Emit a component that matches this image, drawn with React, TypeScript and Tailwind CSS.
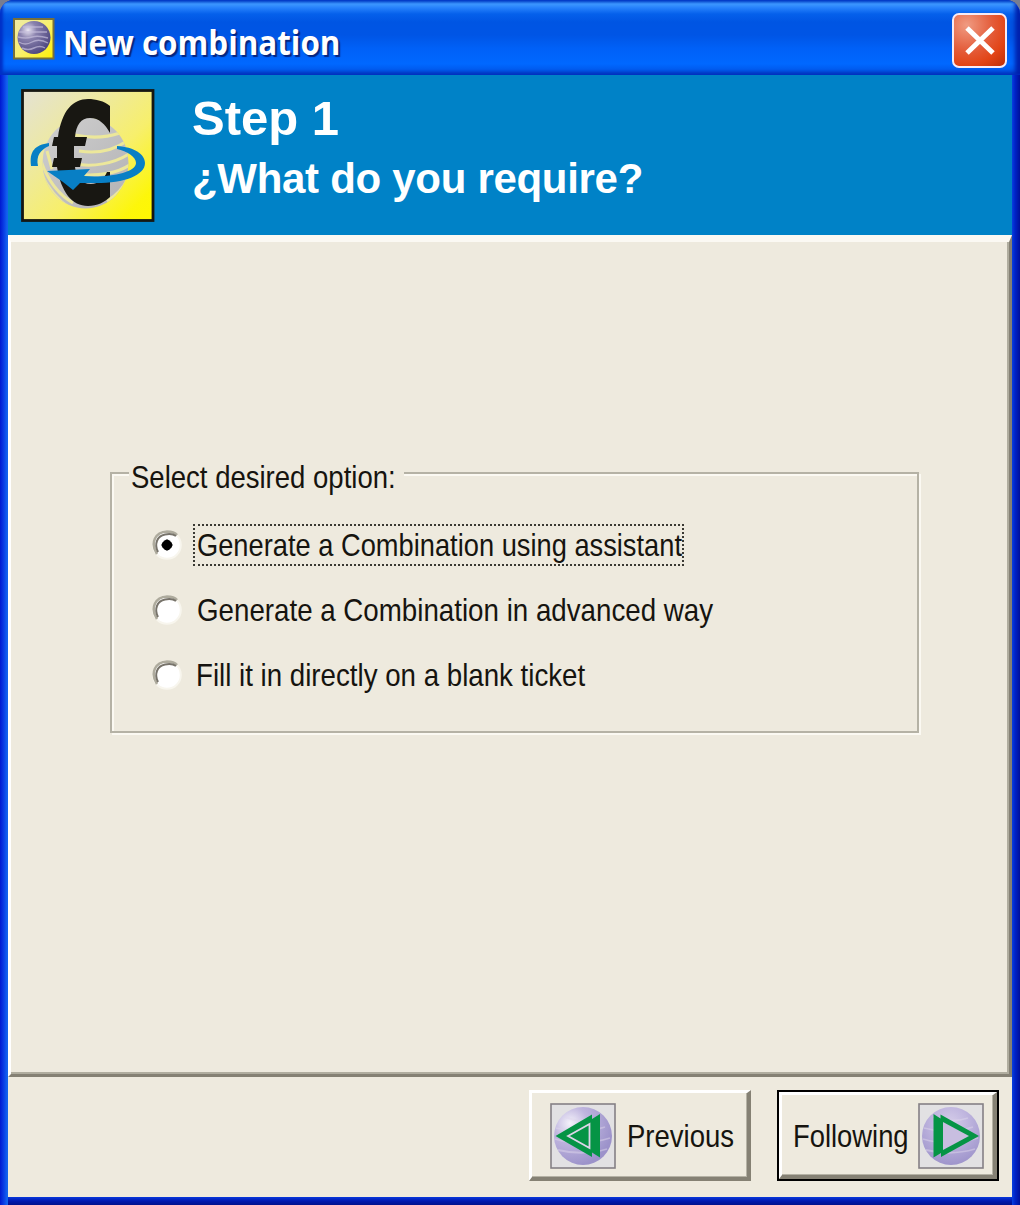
import React from "react";

const label =
  "block origin-left whitespace-nowrap font-['Liberation_Sans',sans-serif] text-[32px] leading-[36px] text-[#16140f]";

function AppIcon() {
  return (
    <svg viewBox="0 0 42 42" className="h-[42px] w-[42px] shrink-0">
      <defs>
        <radialGradient id="ball" cx="32%" cy="28%" r="75%">
          <stop offset="0" stopColor="#e9e5f2" />
          <stop offset="0.35" stopColor="#8a82ae" />
          <stop offset="1" stopColor="#4f4880" />
        </radialGradient>
        <linearGradient id="tile" x1="0" y1="0" x2="1" y2="1">
          <stop offset="0" stopColor="#eeeaa8" />
          <stop offset="0.5" stopColor="#f8f070" />
          <stop offset="1" stopColor="#fff000" />
        </linearGradient>
      </defs>
      <rect x="1" y="1" width="39.500" height="39.500" fill="url(#tile)" stroke="#77703a" strokeWidth="2" />
      <circle cx="21" cy="19.500" r="16.500" fill="url(#ball)" />
      <g fill="none" stroke="#c4bedb" strokeWidth="1.400" opacity="0.7">
        <path d="M10 9h20M6 14h28M5 19q8 2 14 0t16 1M6 24q6 4 13 0t16 1M9 30q6 3 12 0t11 0" />
      </g>
    </svg>
  );
}

function EuroLogo() {
  return (
    <svg viewBox="0 0 134 133" className="h-[133px] w-[134px] shrink-0">
      <defs>
        <linearGradient id="logoBg" x1="0" y1="0" x2="1" y2="1">
          <stop offset="0" stopColor="#e4e2d4" />
          <stop offset="0.28" stopColor="#ece8a8" />
          <stop offset="0.6" stopColor="#f7ef6c" />
          <stop offset="0.88" stopColor="#fdf60a" />
          <stop offset="1" stopColor="#fff800" />
        </linearGradient>
        <linearGradient id="globe" x1="0" y1="0" x2="1" y2="1">
          <stop offset="0" stopColor="#d0d0d0" />
          <stop offset="1" stopColor="#b2b1b3" />
        </linearGradient>
        <clipPath id="globeClip">
          <ellipse cx="64.500" cy="74" rx="43" ry="45.500" />
        </clipPath>
      </defs>
      <rect x="1.500" y="1.500" width="130.500" height="130" fill="url(#logoBg)" stroke="#151712" strokeWidth="2.800" />
      <g clipPath="url(#globeClip)">
        <rect x="20" y="28" width="90" height="94" fill="url(#globe)" />
        <g fill="none" stroke="#ece79b" strokeWidth="3">
          <path d="M54 46C68 49 84 49 99 44" />
          <path d="M58 62C76 65 93 61 106 52" />
          <path d="M54 75C72 78 92 75 108 65" />
          <path d="M54 85C76 88 98 84 110 75" />
          <path d="M20 72C27 92 38 106 52 114" />
          <path d="M20 84C28 102 38 112 50 120" />
          <path d="M26 62L31 80" />
          <path d="M86 112C97 106 103 98 108 88" />
        </g>
      </g>
      <path
        d="M89 17C83 12 75 10 67 10C52 10 41 21 37 48H33L31 57H36V69H33L31 78H36C40 103 51 117 67 117C76 117 84 113 89 108V83H86C83 90 78 95 70 95C60 95 55 88 54 78H59L61 69H53V57H64L66 48H54C55 36 60 29 69 29C78 29 84 35 89 44Z"
        fill="#181712"
      />
      <path d="M28 54C14 56 8 62 10 77H17C15 67 19 61 28 57Z" fill="#087fc5" />
      <path
        d="M96 57C113 58 124 65 124 74C124 87 101 95 70 94L59 94L52 101L42 93L26 82L69 80L63 87C86 89 115 84 115 74C115 68 106 62 96 60Z"
        fill="#087fc5"
      />
    </svg>
  );
}

function ArrowIcon({ forward = false }: { forward?: boolean }) {
  const id = forward ? "orbNext" : "orbBack";
  return (
    <svg viewBox="0 0 66 66" className="h-[66px] w-[66px] shrink-0">
      <defs>
        <radialGradient id={id} cx={forward ? "48%" : "28%"} cy="28%" r="75%">
          <stop offset="0" stopColor={forward ? "#d5cde9" : "#f5f3fb"} />
          <stop offset="0.4" stopColor="#c0b6df" />
          <stop offset="1" stopColor="#9c92ca" />
        </radialGradient>
      </defs>
      <rect x="1" y="1" width="64" height="64" fill="#e2e1e3" stroke="#858085" strokeWidth="1.600" />
      <circle cx="33" cy="33" r="29" fill={`url(#${id})`} />
      <path d="M15 14q17 7 35 1M6 25q24 7 49-1M5 36q27 8 55-1M8 47q25 6 49-1" fill="none" stroke="#ddd6eb" strokeWidth="1.800" opacity="0.5" />
      {forward ? (
        <g fill="#059445">
          <path d="M15.500 11L22.500 15.500V11.500L61 33L23 54V50L15.500 54.500Z" />
          <path d="M25 19L51 33L25 47Z" fill="#c8bee0" />
        </g>
      ) : (
        <g fill="#059445">
          <path d="M5.500 33L42 11.500V16L50 11V54.500L42 49.500V54Z" />
          <path d="M18 33L39.500 21V45Z" fill="none" stroke="#dcd5e8" strokeWidth="1.800" />
        </g>
      )}
    </svg>
  );
}

function Radio({ checked }: { checked?: boolean }) {
  return (
    <svg viewBox="0 0 32 32" className="h-8 w-8 shrink-0">
      <circle cx="16" cy="16" r="13.800" fill="#fff" stroke="#f8f6ee" strokeWidth="2" />
      <path d="M6 25C-1 14 4 3 16 2.500C21 2.500 24 3.500 26 6" fill="none" stroke="#aeab9d" strokeWidth="2.600" />
      <path d="M7 23C3 15 6 7 14 5.500C19 4.500 23 5.500 25 7" fill="none" stroke="#77736a" strokeWidth="2" />
      {checked && <path d="M16 10.300L18.500 11.500L20.500 13.500L21.700 16L20.500 18.500L18.500 20.500L16 21.700L13.500 20.500L11.500 18.500L10.300 16L11.500 13.500L13.500 11.500Z" fill="#000" />}
    </svg>
  );
}

const bevel =
  "border-b-[4px] border-l-[3px] border-r-[4px] border-t-[3px] border-b-[#858174] border-l-white border-r-[#858174] border-t-white shadow-[inset_-1px_-1px_0_#b5b2a5]";

export default function App() {
  return (
    <div className="h-[1205px] w-[1020px] overflow-hidden bg-[#777d91]">
      <main className="flex h-full w-full flex-col overflow-hidden rounded-t-[14px] bg-[#0024cc]">
        <header className="flex h-[75px] shrink-0 items-start bg-[linear-gradient(to_bottom,#0657d5_0,#3d98ff_4px,#2580fb_8px,#0560eb_14px,#0055e3_22px,#0055e5_35px,#0061f8_49px,#0068ff_64px,#005cf0_69px,#0044cf_73px,#0042c8_75px)] pl-[13px] pt-[18px] shadow-[inset_3px_0_3px_#0030c8,inset_-5px_0_4px_#0020ac]">
          <AppIcon />
          <h1 className="ml-[8px] mt-[1px] origin-left scale-x-[0.922] whitespace-nowrap font-['Open_Sans',sans-serif] text-[34px] font-bold leading-[46px] text-white [text-shadow:2px_2px_1px_#06257e]">
            New combination
          </h1>
          <button aria-label="Close" className="ml-auto mr-[13px] mt-[-5px] flex h-[55px] w-[55px] items-center justify-center rounded-[7px] border-[2.5px] border-[#f7ebf5] bg-[radial-gradient(circle_at_25%_20%,#f09b82,#e45d3b_45%,#e24416_72%,#bc2e08)]">
            <svg viewBox="0 0 50 50" className="h-[50px] w-[50px]">
              <path d="M12 12L38 37M38 12L12 37" stroke="white" strokeWidth="5" />
            </svg>
          </button>
        </header>

        <div className="flex min-h-0 flex-1 flex-col bg-[linear-gradient(to_right,#0019cf_0,#0a3fe6_4px,#1262ee_7px,#1262ee_8px,transparent_8px,transparent_1012px,#0840e0_1012px,#0024c8_1015px,#00109a_1020px),linear-gradient(to_top,#00108c_0,#0018b0_4px,#0838dc_8px)] px-2 pb-2">
          <section className="flex h-[160px] shrink-0 bg-[#0082c7] pl-[13px] pt-[14px]">
            <EuroLogo />
            <div className="ml-[37px] whitespace-nowrap font-['Liberation_Sans',sans-serif] font-bold text-white">
              <h2 className="mt-[1px] text-[49px] leading-[56px]">Step 1</h2>
              <p className="mt-[9px] text-[42px] leading-[48px] tracking-[-0.3px]">¿What do you require?</p>
            </div>
          </section>

          <section className="h-[842px] shrink-0 border-b-[3px] border-l-[3px] border-r-[3px] border-t-[7px] border-b-[#858174] border-l-white border-r-[#858174] border-t-[#fbf9f3] bg-[#eeeade] pl-[99px] pt-[230px] shadow-[inset_-2px_-2px_0_#b0ad9f]">
            <fieldset className="relative h-[261px] w-[809px] border-[2.5px] border-[#b5b2a5] pl-[39px] pt-[49px] shadow-[inset_2px_2px_0_#fbf9f2,2px_2px_0_#fbf9f2]">
              <legend className="absolute left-[17px] top-[-15px] h-9 w-[275px] bg-[#eeeade] pl-[2px]">
                <span className={`${label} scale-x-[0.86]`}>Select desired option:</span>
              </legend>
              <label className="flex h-[44px] items-center">
                <Radio checked />
                <span className="ml-[10px] flex h-[42px] w-[491px] items-center border-2 border-dotted border-[#3a3933] pl-[2px]">
                  <span className={`${label} scale-x-[0.852]`}>Generate a Combination using assistant</span>
                </span>
              </label>
              <label className="mt-[21px] flex h-[44px] items-center">
                <Radio />
                <span className={`${label} ml-[14px] scale-x-[0.866]`}>Generate a Combination in advanced way</span>
              </label>
              <label className="mt-[21px] flex h-[44px] items-center">
                <Radio />
                <span className={`${label} ml-[13px] scale-x-[0.865]`}>Fill it in directly on a blank ticket</span>
              </label>
            </fieldset>
          </section>

          <footer className="flex flex-1 justify-end gap-[26px] bg-[#eeeade] pr-[13px] pt-[13px]">
            <button className={`flex h-[91px] w-[222px] items-center pl-[18px] pt-[2px] ${bevel}`}>
              <ArrowIcon />
              <span className={`${label} ml-[11px] scale-x-[0.86]`}>Previous</span>
            </button>
            <button className="h-[91px] w-[222px] border-[2.5px] border-black">
              <span className={`flex h-full w-full items-center pl-[11px] pt-[2px] ${bevel}`}>
                <span className="w-[125px]">
                  <span className={`${label} scale-x-[0.855] text-left`}>Following</span>
                </span>
                <ArrowIcon forward />
              </span>
            </button>
          </footer>
        </div>
      </main>
    </div>
  );
}
